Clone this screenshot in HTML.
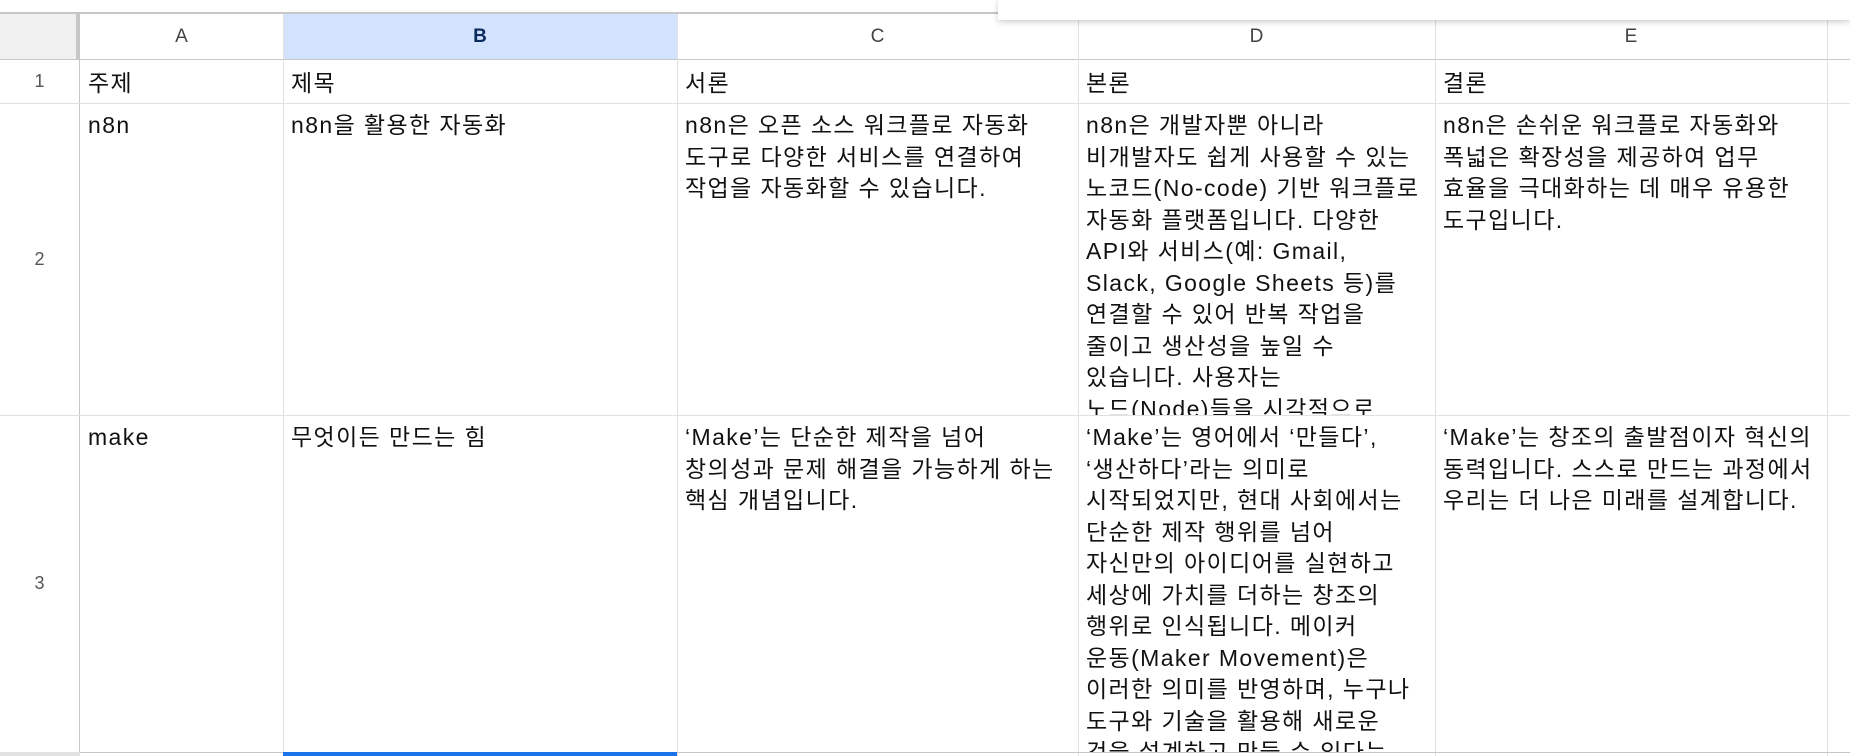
<!DOCTYPE html>
<html><head><meta charset="utf-8"><style>
body{margin:0;width:1850px;height:756px;overflow:hidden;background:#fff;font-family:"Liberation Sans","Noto Sans CJK KR",sans-serif;position:relative}
.v{position:absolute;top:14px;bottom:0;width:1px;background:#e1e1e1}
.h{position:absolute;left:0;right:0;height:1px;background:#e1e1e1}
.hdr{position:absolute;top:14px;height:46px;background:#fff;border-bottom:1px solid #c7c7c7;box-sizing:border-box;text-align:center;line-height:46px;font-size:19px;color:#444}
.rh{position:absolute;left:0;width:80px;background:#fff;border-right:1px solid #c7c7c7;box-sizing:border-box;text-align:center;font-size:18px;color:#555}
.c{position:absolute;overflow:hidden;font-size:23px;line-height:31.5px;color:#111;padding:6px 8px;box-sizing:border-box;white-space:nowrap;letter-spacing:1.4px}
</style></head><body>
<div style="position:absolute;left:0;right:0;top:12px;height:2px;background:#c7c7c7"></div>
<div style="position:absolute;left:998px;right:0;top:0;height:20px;background:#fff;box-shadow:0 2px 6px rgba(0,0,0,.2);z-index:5"></div>
<div class="hdr" style="left:0;width:80px;background:#f0f0f0;border-right:4px solid #c7c7c7"></div>
<div class="hdr" style="left:80px;width:203px">A</div>
<div class="hdr" style="left:283px;width:394px;background:#d3e3fd;color:#0b2a5e;font-weight:bold">B</div>
<div class="hdr" style="left:677px;width:401px">C</div>
<div class="hdr" style="left:1078px;width:357px">D</div>
<div class="hdr" style="left:1435px;width:392px">E</div>
<div class="hdr" style="left:1827px;width:23px"></div>
<div class="rh" style="top:60px;height:43px;line-height:43px">1</div>
<div class="rh" style="top:103px;height:312px;line-height:312px">2</div>
<div class="rh" style="top:415px;height:337px;line-height:337px">3</div>
<div class="v" style="left:283px"></div><div class="v" style="left:677px"></div><div class="v" style="left:1078px"></div><div class="v" style="left:1435px"></div><div class="v" style="left:1827px"></div>
<div class="h" style="top:103px"></div><div class="h" style="top:415px"></div><div class="h" style="top:752px;background:#c7c7c7"></div>
<div style="position:absolute;left:283px;width:394px;top:752px;height:4px;background:#1a73e8"></div>
<div style="position:absolute;left:0;width:80px;top:752px;height:4px;background:#e1e1e1"></div>

<div class="c" style="left:80px;top:60px;width:203px;height:43px;padding-top:8px">주제</div>
<div class="c" style="left:283px;top:60px;width:394px;height:43px;padding-top:8px">제목</div>
<div class="c" style="left:677px;top:60px;width:401px;height:43px;padding-top:8px">서론</div>
<div class="c" style="left:1078px;top:60px;width:357px;height:43px;padding-top:8px">본론</div>
<div class="c" style="left:1435px;top:60px;width:392px;height:43px;padding-top:8px">결론</div>

<div class="c" style="left:80px;top:104px;width:203px;height:311px">n8n</div>
<div class="c" style="left:283px;top:104px;width:394px;height:311px">n8n을 활용한 자동화</div>
<div class="c" style="left:677px;top:104px;width:401px;height:311px">n8n은 오픈 소스 워크플로 자동화<br>도구로 다양한 서비스를 연결하여<br>작업을 자동화할 수 있습니다.</div>
<div class="c" style="left:1078px;top:104px;width:357px;height:311px">n8n은 개발자뿐 아니라<br>비개발자도 쉽게 사용할 수 있는<br>노코드(No-code) 기반 워크플로<br>자동화 플랫폼입니다. 다양한<br>API와 서비스(예: Gmail,<br>Slack, Google Sheets 등)를<br>연결할 수 있어 반복 작업을<br>줄이고 생산성을 높일 수<br>있습니다. 사용자는<br>노드(Node)들을 시각적으로</div>
<div class="c" style="left:1435px;top:104px;width:392px;height:311px">n8n은 손쉬운 워크플로 자동화와<br>폭넓은 확장성을 제공하여 업무<br>효율을 극대화하는 데 매우 유용한<br>도구입니다.</div>

<div class="c" style="left:80px;top:416px;width:203px;height:336px">make</div>
<div class="c" style="left:283px;top:416px;width:394px;height:336px">무엇이든 만드는 힘</div>
<div class="c" style="left:677px;top:416px;width:401px;height:336px">‘Make’는 단순한 제작을 넘어<br>창의성과 문제 해결을 가능하게 하는<br>핵심 개념입니다.</div>
<div class="c" style="left:1078px;top:416px;width:357px;height:336px">‘Make’는 영어에서 ‘만들다’,<br>‘생산하다’라는 의미로<br>시작되었지만, 현대 사회에서는<br>단순한 제작 행위를 넘어<br>자신만의 아이디어를 실현하고<br>세상에 가치를 더하는 창조의<br>행위로 인식됩니다. 메이커<br>운동(Maker Movement)은<br>이러한 의미를 반영하며, 누구나<br>도구와 기술을 활용해 새로운<br>것을 설계하고 만들 수 있다는</div>
<div class="c" style="left:1435px;top:416px;width:392px;height:336px">‘Make’는 창조의 출발점이자 혁신의<br>동력입니다. 스스로 만드는 과정에서<br>우리는 더 나은 미래를 설계합니다.</div>
</body></html>
